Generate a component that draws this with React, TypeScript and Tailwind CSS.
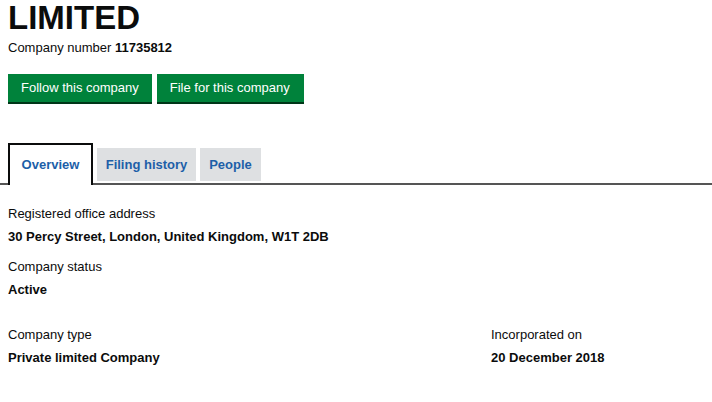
export default function App() {
  return (
    <div className="w-[712px] h-[402px] bg-white text-[#0b0c0c] overflow-hidden" style={{ fontFamily: '"Liberation Sans", Arial, sans-serif' }}>
      <div className="pl-2">
        <h1 className="text-[33px] leading-[38px] font-bold -mt-[1px]">LIMITED</h1>
        <p className="mt-[3px] text-[13px] leading-[16px]">
          Company number <span className="font-bold">11735812</span>
        </p>
        <div className="mt-[18px] flex gap-[5px]">
          <button className="h-[30px] px-[13px] bg-[#00823b] text-white text-[13px] border-b-2 border-[#003618]">Follow this company</button>
          <button className="h-[30px] pl-[13px] pr-[14px] bg-[#00823b] text-white text-[13px] border-b-2 border-[#003618]">File for this company</button>
        </div>
      </div>
      <div className="mt-[39px] flex items-end border-b-2 border-[#555] pl-2 gap-[4px]">
        <div className="w-[85px] h-[42px] border-2 border-b-0 border-[#0b0c0c] bg-white -mb-[2px] flex items-center justify-center text-[13px] font-bold text-[#1d5fa8]">Overview</div>
        <div className="w-[99px] h-[33px] mb-[2px] bg-[#dee0e2] flex items-center justify-center text-[13px] font-bold text-[#1d5fa8]">Filing history</div>
        <div className="w-[61px] h-[33px] mb-[2px] bg-[#dee0e2] flex items-center justify-center text-[13px] font-bold text-[#1d5fa8]">People</div>
      </div>
      <div className="pl-2 pt-[21px] text-[13px] leading-[16px]">
        <p>Registered office address</p>
        <p className="mt-[7px] font-bold">30 Percy Street, London, United Kingdom, W1T 2DB</p>
        <p className="mt-[14px]">Company status</p>
        <p className="mt-[7px] font-bold">Active</p>
        <div className="mt-[29px] flex">
          <div className="w-[483px]">
            <p>Company type</p>
            <p className="mt-[7px] font-bold">Private limited Company</p>
          </div>
          <div>
            <p>Incorporated on</p>
            <p className="mt-[7px] font-bold">20 December 2018</p>
          </div>
        </div>
      </div>
    </div>
  );
}
